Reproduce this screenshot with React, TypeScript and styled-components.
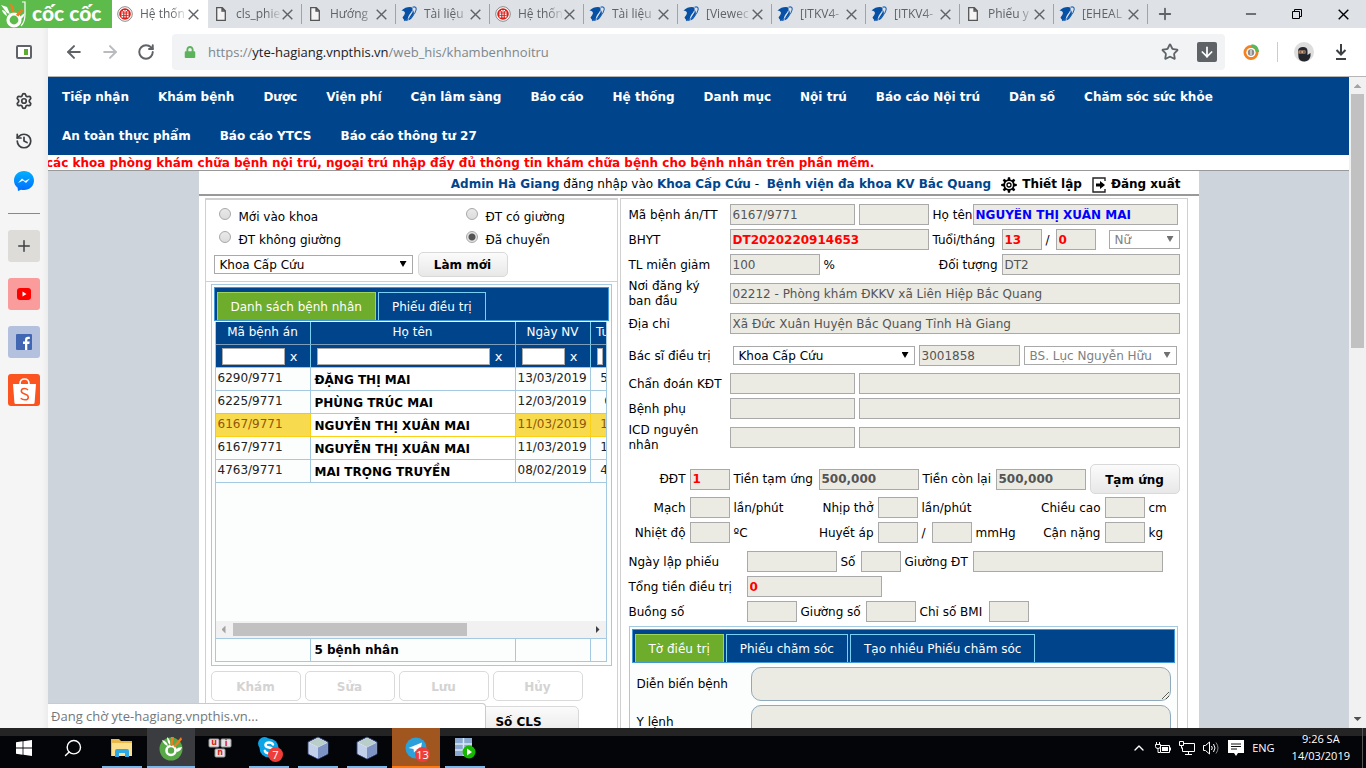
import React from "react";
import styled, { createGlobalStyle, css } from "styled-components";
import { History, Settings, ArrowLeft, ArrowRight, RotateCw, Star, Plus, Minus, Search, ChevronUp, ArrowDown } from "lucide-react";
import { FaLock } from "react-icons/fa";

const pageFont = `"DejaVu Sans", sans-serif`;
const uiFont = `"Open Sans", "Noto Sans", sans-serif`;
const navy = "#00458c";

const GlobalStyle = createGlobalStyle`
  *, *::before, *::after { box-sizing: border-box; }
  body { margin: 0; background: #fff; }
  button, input, select, textarea { font: inherit; margin: 0; }
  a { color: inherit; text-decoration: none; }
`;

/* ---------- browser shell ---------- */

const Shell = styled.div`
  display: flex;
  flex-direction: column;
  height: 100vh;
  overflow: hidden;
  font: 12px/16px ${uiFont};
  color: #000;
`;

const TabStrip = styled.div`
  display: flex;
  align-items: stretch;
  flex: 0 0 28px;
  background: #dee1e6;
  color: #5f6368;
`;

const Brand = styled.div`
  display: flex;
  align-items: center;
  width: 112px;
  background: #5dbb4c;
`;

const BrowserTab = styled.div<{ $active?: boolean }>`
  display: flex;
  align-items: center;
  width: ${(p) => (p.$active ? 96 : 94)}px;
  padding: 0 9px 0 5px;
  background: ${(p) => (p.$active ? "#fff" : "linear-gradient(#a0a4a9, #a0a4a9) right center / 1px 20px no-repeat")};
  svg { flex: none; }
`;

const TabTitle = styled.span`
  flex: 1;
  min-width: 0;
  margin: 0 0 0 7px;
  overflow: hidden;
  white-space: nowrap;
  mask-image: linear-gradient(to right, #000 65%, transparent);
`;

const IconButton = styled.button`
  display: inline-flex;
  align-items: center;
  justify-content: center;
  padding: 0;
  border: 0;
  background: none;
  color: inherit;
`;

const NewTab = styled(IconButton)`
  width: 34px;
`;

const WindowButtons = styled.div`
  display: flex;
  margin-left: auto;
  color: #000;
  button { width: 46px; }
`;

const Middle = styled.div`
  display: flex;
  flex: 1;
  min-height: 0;
`;

const Sidebar = styled.aside`
  display: flex;
  flex-direction: column;
  align-items: center;
  flex: 0 0 48px;
  padding-top: 12px;
  background: linear-gradient(to right, #f5f5f5 42px, #ececec);
  color: #3c4043;
`;

const SideTool = styled(IconButton)`
  width: 32px;
  height: 40px;
`;

const SidePanelTool = styled(IconButton)`
  width: 32px;
  height: 24px;
  margin-bottom: 17px;
`;

const SideRule = styled.hr`
  width: 32px;
  margin: 12px 0 16px;
  border: 0;
  border-top: 1px solid #888;
`;

const SideApp = styled(IconButton)<{ $bg: string }>`
  width: 32px;
  height: 32px;
  margin-bottom: 16px;
  border-radius: 3px;
  background: ${(p) => p.$bg};
`;

const Content = styled.div`
  position: relative;
  display: flex;
  flex: 1;
  flex-direction: column;
  min-width: 0;
`;

const Toolbar = styled.div`
  display: flex;
  align-items: center;
  flex: 0 0 49px;
  padding: 0 19px 0 16px;
  border-bottom: 1px solid #b6b6b6;
  background: #fff;
  color: #5f6368;
`;

const NavTool = styled(IconButton)<{ $dim?: boolean }>`
  width: 20px;
  margin-right: 16px;
  color: ${(p) => (p.$dim ? "#b9bbbe" : "#5f6368")};
`;

const Address = styled.div`
  display: flex;
  align-items: center;
  flex: 1;
  height: 36px;
  padding: 0 8px 0 12px;
  border-radius: 4px;
  background: #f1f3f4;
`;

const Url = styled.a`
  flex: 1;
  margin-left: 12px;
  font-size: 13px;
  line-height: 20px;
  color: #80868b;
  b { font-weight: 400; color: #202124; }
`;

const SaveBadge = styled(IconButton)`
  width: 20px;
  height: 20px;
  margin-left: 18px;
  border-radius: 2px;
  background: #5f6368;
  color: #fff;
`;

const Extensions = styled.div`
  display: flex;
  align-items: center;
  margin-left: 18px;
  button { margin-left: 21px; }
`;

const Divider = styled.span`
  width: 1px;
  height: 20px;
  margin: 0 16px 0 18px;
  background: #ccc;
`;

const Viewport = styled.div`
  display: flex;
  flex: 1;
  min-height: 0;
`;

const ScrollBar = styled.div`
  display: flex;
  flex-direction: column;
  align-items: center;
  flex: 0 0 17px;
  background: #f1f1f1;
`;

const ScrollArrow = styled.span<{ $down?: boolean }>`
  width: 8px;
  height: 4px;
  margin: ${(p) => (p.$down ? "auto 0 7px" : "7px 0 6px")};
  background: ${(p) => (p.$down ? "#505050" : "#a3a3a3")};
  clip-path: ${(p) => (p.$down ? "polygon(0 0, 100% 0, 50% 100%)" : "polygon(50% 0, 100% 100%, 0 100%)")};
`;

const ScrollThumb = styled.span`
  width: 13px;
  height: 39%;
  background: #c1c1c1;
`;

const StatusBubble = styled.div`
  position: absolute;
  left: 0;
  bottom: 0;
  width: 438px;
  height: 25px;
  padding: 4px 3px;
  border: 1px solid #c8ccd0;
  border-width: 1px 1px 0 0;
  border-radius: 0 4px 0 0;
  background: #fff;
  color: #73777b;
  font-size: 13px;
`;

/* ---------- hospital page ---------- */

const Page = styled.div`
  flex: 1;
  min-width: 0;
  overflow: hidden;
  background: #cdd4dc;
  font: 12px/15px ${pageFont};
`;

const Menu = styled.nav`
  display: flex;
  flex-wrap: wrap;
  column-gap: 29px;
  padding: 0 14px;
  background: ${navy};
  color: #fff;
  font-weight: 700;
  line-height: 37px;
  a { padding-top: 2px; }
`;

const Notice = styled.div`
  display: flex;
  height: 16px;
  overflow: hidden;
  border-bottom: 1px solid #999;
  background: #fff;
  color: #f00;
  font-weight: 700;
  line-height: 17px;
  white-space: nowrap;
  span { margin-left: -2px; }
`;

const Sheet = styled.main`
  max-width: 1000px;
  margin: 0 auto;
  background: #fff;
`;

const UserBar = styled.div`
  display: flex;
  align-items: center;
  justify-content: flex-end;
  gap: 5px;
  height: 25px;
  padding: 4px 18px 0 0;
  border-bottom: 2px solid #999;
  white-space: nowrap;
  b { color: ${navy}; }
  svg { margin-left: 5px; }
  a { font-weight: 700; }
`;

const Panels = styled.div`
  display: grid;
  grid-template-columns: 413fr 568fr;
  gap: 2px;
  padding: 2px 11px 0 6px;
`;

const Panel = styled.section`
  min-width: 0;
  border: 1px solid #d0d0d0;
  border-bottom: 0;
`;

const Filters = styled.div`
  height: 83px;
  padding: 5px 8px 0;
  border-top: 1px solid #d0d0d0;
  border-bottom: 1px solid #d0d0d0;
`;

const RadioGrid = styled.div`
  display: grid;
  grid-template-columns: 247px 1fr;
  padding-left: 5px;
  grid-auto-rows: 23px;
`;

const RadioLabel = styled.label`
  display: flex;
  align-items: center;
  gap: 8px;
  padding-top: 1px;
`;

const Radio = styled.input`
  appearance: none;
  width: 12px;
  height: 12px;
  margin-bottom: 6px;
  border: 1px solid #a8a8a8;
  border-radius: 50%;
  background: linear-gradient(#e9e9e9, #dcdcdc);
  &:checked { background: radial-gradient(circle, #555 0 3px, #e4e4e4 4px); }
`;

const FilterRow = styled.div`
  display: flex;
  align-items: center;
  gap: 5px;
  margin-top: 1px;
`;

const PushButton = styled.button`
  width: 90px;
  height: 30px;
  padding: 2px 0 0;
  border: 1px solid #d9d9d9;
  border-radius: 5px;
  background: linear-gradient(#fbfbfb, #e8e8e8);
  color: #000;
  font-weight: 700;
  &:disabled { border-color: #dadada; background: #fff; color: #d3d3d3; }
`;

const ReloadButton = styled(PushButton)`
  height: 25px;
`;

const SelectBox = styled.span<{ $w: number; $dim?: boolean }>`
  position: relative;
  display: inline-block;
  width: ${(p) => p.$w}px;
  height: 19px;
  select {
    appearance: none;
    display: block;
    width: 100%;
    height: 100%;
    padding: 1px 5px 0;
    border: 1px solid #a9a9a9;
    border-radius: 0;
    background: #fff;
    color: ${(p) => (p.$dim ? "#808080" : "#000")};
    opacity: 1;
  }
  &::after {
    content: "";
    position: absolute;
    right: 6px;
    top: 6px;
    width: 7px;
    height: 6px;
    background: ${(p) => (p.$dim ? "#707070" : "#000")};
    clip-path: polygon(0 0, 100% 0, 50% 100%);
  }
`;

const TabBox = styled.div<{ $m: string }>`
  margin: ${(p) => p.$m};
  padding: 2px;
  border: 1px solid #a6c9e2;
  background: #fcfdfd;
`;

const TabHeader = styled.div`
  display: flex;
  gap: 2px;
  height: 34px;
  padding: 4px 2px 0;
  border: 1px solid #4297d7;
  background: ${navy};
`;

const Tab = styled.button<{ $on?: boolean }>`
  padding: 2px 13px 0;
  border: 1px solid #79d0f2;
  border-bottom: 0;
  background: ${navy};
  color: #fff;
  white-space: nowrap;
  ${(p) => p.$on && css`
    border-color: #9fd45a;
    background: #6eac2c;
  `}
`;

const Grid = styled.div`
  margin: 1px 2px 1px 1px;
  border: 1px solid #a6c9e2;
  border-top: 0;
  overflow: hidden;
`;

const GridBody = styled.div`
  height: 299px;
  overflow: hidden;
`;

const GridTable = styled.table`
  width: 411px;
  table-layout: fixed;
  border-collapse: separate;
  border-spacing: 0;
  th, td { padding: 0; overflow: hidden; white-space: nowrap; }
  th {
    height: 23px;
    padding-bottom: 1px;
    border-right: 1px solid #79d0f2;
    border-bottom: 1px solid #7f9cb8;
    background: ${navy};
    color: #fff;
    font-weight: 400;
  }
  th.search { padding-bottom: 0; border-bottom-color: #79d0f2; }
`;

const Cell = styled.td<{ $hl?: boolean; $name?: boolean; $center?: boolean }>`
  height: 23px;
  border-right: 1px solid #a6c9e2;
  border-bottom: 1px solid #a6c9e2;
  color: #222;
  && { padding: ${(p) => (p.$name ? "2px 4px 0" : p.$center ? "0 0 1px" : "0 2px 1px")}; }
  text-align: ${(p) => (p.$center ? "center" : "left")};
  ${(p) => p.$name && css`
    background: #fff;
    color: #000;
    font-weight: 700;
  `}
  ${(p) => p.$hl && css`
    border-color: #fcd113;
    ${!p.$name && css`
      background: #f8da4e;
      color: #915608;
    `}
  `}
`;

const SearchCell = styled.div`
  display: flex;
  align-items: center;
  gap: 5px;
  padding: 0 12px 0 6px;
  input {
    flex: 1;
    min-width: 0;
    height: 17px;
    border: 1px solid #a9a9a9;
    background: #fff;
  }
  button { flex: 0 0 8px; padding: 0; border: 0; background: none; color: #fff; font-size: 13px; }
`;

const HScroll = styled.div`
  display: flex;
  align-items: center;
  height: 17px;
  padding: 0 6px;
  background: #f1f1f1;
`;

const HArrow = styled.span<{ $right?: boolean }>`
  width: 4px;
  height: 8px;
  margin-left: ${(p) => (p.$right ? "auto" : "0")};
  background: ${(p) => (p.$right ? "#404040" : "#a3a3a3")};
  clip-path: ${(p) => (p.$right ? "polygon(0 0, 100% 50%, 0 100%)" : "polygon(100% 0, 100% 100%, 0 50%)")};
`;

const HThumb = styled.span`
  width: 62%;
  height: 13px;
  margin-left: 7px;
  background: #c1c1c1;
`;

const GridFooter = styled.div`
  display: grid;
  grid-template-columns: 95px 205px 75px 1fr;
  height: 23px;
  border-top: 1px solid #a6c9e2;
  line-height: 23px;
  font-weight: 700;
  span { padding-left: 4px; border-right: 1px solid #a6c9e2; }
  span:last-child { border-right: 0; }
`;

const Actions = styled.div`
  display: flex;
  gap: 4px;
  padding: 5px 5px 0;
`;

const MoreActions = styled(Actions)`
  justify-content: flex-end;
  padding-right: 38px;
  button { width: 120px; }
`;

const Form = styled.form`
  padding: 3px 6px 0 8px;
`;

const Row = styled.div<{ $h?: number; $mt?: number }>`
  display: flex;
  align-items: center;
  gap: 4px;
  height: ${(p) => p.$h ?? 25}px;
  margin-top: ${(p) => p.$mt ?? 0}px;
  padding-right: 1px;
`;

const Label = styled.label<{ $w?: number; $right?: boolean; $wrap?: boolean }>`
  flex: 0 0 auto;
  width: ${(p) => (p.$w ? `${p.$w}px` : "auto")};
  padding-top: 1px;
  padding-right: ${(p) => (p.$wrap ? 12 : 0)}px;
  white-space: ${(p) => (p.$wrap ? "normal" : "nowrap")};
  ${(p) => p.$right && css`
    display: flex;
    justify-content: flex-end;
  `}
`;

const RowEnd = styled.div`
  display: flex;
  align-items: center;
  gap: 4px;
  margin-left: auto;
`;

const Box = styled.input<{ $w?: number; $color?: string }>`
  flex: ${(p) => (p.$w ? "0 0 auto" : "1 1 0")};
  width: ${(p) => (p.$w ? `${p.$w}px` : "auto")};
  min-width: 0;
  height: 21px;
  padding: 0 2px;
  border: 1px solid #a9a9a9;
  background: #ebebe4;
  color: ${(p) => p.$color ?? "#545454"};
  font-weight: ${(p) => (p.$color ? 700 : 400)};
  line-height: 19px;
`;

const Note = styled.div`
  display: flex;
  align-items: center;
  gap: 4px;
  margin-top: 4px;
  padding: 0 4px 0 5px;
  textarea {
    flex: 1;
    height: 34px;
    border: 1px solid #8fa9bd;
    border-radius: 10px;
    background: #ebebe4;
    resize: vertical;
  }
`;

/* ---------- task bar ---------- */

const TaskBar = styled.footer`
  display: flex;
  flex: 0 0 40px;
  gap: 1px;
  background: linear-gradient(#242424 8px, #030509 8px);
  color: #fff;
`;

const TaskButton = styled(IconButton)<{ $bg?: string; $line?: string; $full?: boolean }>`
  position: relative;
  width: 48px;
  height: 40px;
  background: ${(p) => p.$bg ?? "none"};
  &::after {
    content: "";
    position: absolute;
    bottom: 0;
    left: ${(p) => (p.$full ? 0 : 4)}px;
    right: ${(p) => (p.$full ? 0 : 4)}px;
    height: 2px;
    background: ${(p) => p.$line ?? "transparent"};
  }
`;

const Count = styled.span`
  position: absolute;
  right: 10px;
  bottom: 6px;
  min-width: 15px;
  height: 15px;
  border-radius: 8px;
  background: #ef3e3a;
  font-size: 11px;
  line-height: 15px;
`;

const Tray = styled.div`
  display: flex;
  align-items: center;
  gap: 8px;
  margin-left: auto;
  margin-right: 3px;
  padding-right: 12px;
  border-right: 1px solid #555;
  font-size: 11px;
`;

const Clock = styled.div`
  margin-left: 9px;
  padding-bottom: 3px;
  line-height: 17px;
  text-align: center;
`;

/* ---------- drawings ---------- */

const CloseIcon = () => (
  <svg width="11" height="11" viewBox="0 0 11 11" fill="none" stroke="currentColor" strokeWidth="1.400">
    <path d="M.7.7l9.600 9.600M10.300.7L.7 10.300" />
  </svg>
);

const CocLogo = () => (
  <svg width="112" height="28" viewBox="0 0 112 28">
    <circle cx="14" cy="20" r="6" fill="none" stroke="#fff" strokeWidth="3.200" />
    <path d="M2 10q1 4 5 6-1-6-5-6zM1 5l6 8 3 1-3-7z" fill="#fff" />
    <path d="M10 3l1.500 9 3 .5Q14 5 10 3zM23.500 9.500Q18 10 16 15l2.500 1.500z" fill="#f47b20" />
    <path d="M25 13q-3 1.500-5 4l1 2q3-2 4-6z" fill="#fff" />
    <path d="M22 2h3v12q0 8-4 12" stroke="#fff" strokeWidth="1.200" fill="none" />
    <text x="32" y="21" fill="#fff" fontFamily="Lato, sans-serif" fontWeight="900" fontSize="21">cốc cốc</text>
  </svg>
);

const SealIcon = () => (
  <svg width="16" height="16" viewBox="0 0 16 16">
    <circle cx="8" cy="8" r="7.300" fill="#fff" stroke="#888" />
    <circle cx="8" cy="8" r="5.800" fill="#d9201a" />
    <path d="M4.500 5.500h1.500V4h4v1.500h1.500v6h-7z" fill="#fff" />
    <path d="M6.500 5v7M9.500 5v7M8 4v8M4.500 7h7M4.500 9.500h7" stroke="#d9201a" strokeWidth=".8" fill="none" />
  </svg>
);

const PageIcon = () => (
  <svg width="16" height="16" viewBox="0 0 16 16">
    <path d="M3.700 1.700h5.600l3 3v9.600H3.700z M9 1.700v3.300h3.300" fill="#f4f4f4" stroke="#555" strokeWidth="1.300" />
  </svg>
);

const VnptIcon = () => (
  <svg width="16" height="16" viewBox="0 0 16 16">
    <path d="M.5 4.500Q5 .5 10.500 1.200Q13 2.200 10 6.500Q6.500 10.500 6.500 15Q2.500 14.500 1.500 11.500Q3.500 9.500 4 7Q3.500 4.500 .5 4.500Z" fill="#0650a5" />
    <path d="M11.500 3.500Q14 6.500 12 10.500Q10 14 7.500 14.500Q8 11 10.500 8Q12.300 5.500 11.500 3.500Z" fill="#0650a5" />
    <path d="M11.500 1.200Q15.500 0 15.200 3.500Q13.500 11.500 3 14.800" fill="none" stroke="#2467b5" strokeWidth="1.100" />
  </svg>
);

const PanelIcon = () => (
  <svg width="16" height="14" viewBox="0 0 16 14">
    <rect x="1" y="1" width="14" height="12" rx="1" fill="#fff" stroke="#5f6368" strokeWidth="2" />
    <rect x="8" y="4" width="4" height="6" fill="#5dab2f" />
  </svg>
);

const MessengerIcon = () => (
  <svg width="20" height="20" viewBox="0 0 20 20">
    <defs>
      <linearGradient id="msg" x1="0" y1="0" x2="0" y2="1">
        <stop offset="0" stopColor="#00b2ff" />
        <stop offset="1" stopColor="#006aff" />
      </linearGradient>
    </defs>
    <path d="M10 0C4.400 0 0 4.100 0 9.500c0 3 1.400 5.600 3.600 7.300L4 20l3-1.300c1 .2 2 .3 3 .3 5.600 0 10-4 10-9.500S15.600 0 10 0z" fill="url(#msg)" />
    <path d="M4 12l4-4.500 3 2.500 5-2.500-4 4.500-3-2.500z" fill="#fff" />
  </svg>
);

const YoutubeIcon = () => (
  <svg width="16" height="12" viewBox="0 0 16 12">
    <rect x="1" width="14" height="12" rx="3" fill="#f00" />
    <path d="M6.500 3.500v5L10.500 6z" fill="#fff" />
  </svg>
);

const FacebookIcon = () => (
  <svg width="16" height="16" viewBox="0 0 16 16">
    <rect width="16" height="16" rx="1" fill="#4267b2" />
    <path d="M9 16V10H7V7.600h2V6q0-3.200 3-3.200h1.800V5h-1.300q-1.200 0-1.200 1.200v1.400h2.400L13.300 10h-2v6z" fill="#fff" />
  </svg>
);

const ShopeeIcon = () => (
  <svg width="32" height="32" viewBox="0 0 32 32">
    <path d="M5 10h23l-1.400 18.500q-.1 1.500-1.600 1.500H8q-1.500 0-1.600-1.500z" fill="#fff" />
    <path d="M12 10q0-5 4.500-5t4.500 5" fill="none" stroke="#fff" strokeWidth="1.600" />
    <path d="M20 16q-1.500-1.500-3.500-1.500-3.200 0-3.200 2.600 0 1.900 3.400 2.900 3.600 1 3.600 3.200 0 2.600-3.500 2.600-2.300 0-4.100-1.600" fill="none" stroke="#fb5421" strokeWidth="1.500" />
  </svg>
);

const CocRing = () => (
  <svg width="16" height="16" viewBox="0 0 16 16">
    <circle cx="8" cy="8.500" r="6" fill="none" stroke="#f58220" strokeWidth="3" />
    <path d="M8.500 1.800Q14 2 14.500 8" fill="none" stroke="#57b75a" strokeWidth="3.200" />
    <circle cx="8" cy="8.500" r="4.500" fill="#fff" />
    <circle cx="8" cy="8.500" r="3.200" fill="#8b8b8b" />
    <path d="M8 6v5" stroke="#fff" />
  </svg>
);

const NinjaIcon = () => (
  <svg width="20" height="20" viewBox="0 0 20 20">
    <circle cx="10" cy="10" r="10" fill="#ddd" />
    <path d="M4 8.500Q4.500 5 9 5q4.500 0 4.500 4v4l3-2v3q-1 5-6 5.500-5 0-6-4z" fill="#23262d" />
    <path d="M4.500 8.500h7v3h-7z" fill="#e0a986" />
    <path d="M5.500 10h2m1.500 0h2" stroke="#222" />
  </svg>
);

const DownloadIcon = () => (
  <svg width="12" height="16" viewBox="0 0 12 16">
    <path d="M6 0v10M1.500 6L6 10.500 10.500 6M1 15h10" fill="none" stroke="#3c4043" strokeWidth="2" />
  </svg>
);

const gearSpokes = [0, 45, 90, 135, 180, 225, 270, 315];
const CogIcon = () => (
  <svg width="16" height="16" viewBox="0 0 16 16">
    <circle cx="8" cy="8" r="4.800" fill="none" stroke="#000" strokeWidth="1.800" />
    <circle cx="8" cy="8" r="2" fill="none" stroke="#000" strokeWidth="1.300" />
    {gearSpokes.map((a) => (
      <path key={a} d="M6.900 .2h2.200l.4 3H6.500z" transform={`rotate(${a} 8 8)`} />
    ))}
  </svg>
);

const LogoutIcon = () => (
  <svg width="14" height="16" viewBox="0 0 14 16">
    <path d="M13 4V1H1v14h12v-3" fill="none" stroke="#222" strokeWidth="1.400" />
    <path d="M4 6.500h4V4l5 4-5 4V9.500H4z" />
  </svg>
);

const WindowsIcon = () => (
  <svg width="16" height="16" viewBox="0 0 16 16" fill="#fff">
    <path d="M0 2.300L6.600 1.300V7.600H0zM7.400 1.200L16 0v7.600H7.400zM0 8.400h6.600v6.300L0 13.700zM7.400 8.400H16V16l-8.600-1.200z" />
  </svg>
);

const FolderIcon = () => (
  <svg width="22" height="20" viewBox="0 0 22 20">
    <path d="M0 1h8l2 2h11v15H0z" fill="#e9b949" />
    <path d="M1 5h20v13H1z" fill="#fde08c" />
    <path d="M4 19v-6q0-2 2-2h10q2 0 2 2v6h-4v-4H8v4z" fill="#2fa9e6" />
  </svg>
);

const CocTask = () => (
  <svg width="26" height="26" viewBox="0 0 26 26">
    <circle cx="13" cy="14" r="11.500" fill="#57a846" />
    <circle cx="13" cy="15.500" r="4.500" fill="none" stroke="#fff" strokeWidth="2.600" />
    <path d="M4 5q2 5 6 6Q9 6 4 5zM9 2q0 5 3 8 1-5-3-8zM24 12q-4 0-7 3l2 2q4-1 5-5z" fill="#fff" />
    <path d="M13 2h3l-1.500 9h-2zM23 2l1 2.500-7 8-1.500-1.500z" fill="#f47b20" />
  </svg>
);

const KeysIcon = () => (
  <svg width="24" height="20" viewBox="0 0 24 20" fontFamily="DejaVu Sans, sans-serif" fontWeight="700" fontSize="8" fill="#d22" textAnchor="middle">
    <rect x="1" y="1" width="10" height="8" rx="1" fill="#e4e4e4" stroke="#999" />
    <rect x="13" y="1" width="10" height="8" rx="1" fill="#e4e4e4" stroke="#999" />
    <rect x="7" y="11" width="10" height="8" rx="1" fill="#e4e4e4" stroke="#999" />
    <text x="6" y="7">u</text>
    <text x="18" y="8">i</text>
    <text x="12" y="17">n</text>
  </svg>
);

const SkypeIcon = () => (
  <svg width="24" height="24" viewBox="0 0 24 24">
    <circle cx="7.500" cy="7.500" r="6.500" fill="#0aa5e8" />
    <circle cx="16.500" cy="16.500" r="6.500" fill="#0aa5e8" />
    <circle cx="12" cy="12" r="9.500" fill="#0aa5e8" />
    <path d="M16 8.500q-1-2-4-2t-3.600 2.400q0 2 3.600 2.600 4 .7 4 3 0 2.700-4 2.700-3.300 0-4.200-2.400" fill="none" stroke="#fff" strokeWidth="2.400" strokeLinecap="round" />
  </svg>
);

const CubeIcon = () => (
  <svg width="22" height="24" viewBox="0 0 22 24">
    <path d="M11 1l10 5v12l-10 5L1 18V6z" fill="#e5ebf5" stroke="#2b3f77" />
    <path d="M11 2l9 4.500-9 4.500-9-4.500z" fill="#b9cdc9" />
    <path d="M2 7l9 4.500v11L2 18z" fill="#c3d0ea" />
    <path d="M20 7l-9 4.500v11l9-4.500z" fill="#7d93c4" />
  </svg>
);

const TelegramIcon = () => (
  <svg width="22" height="22" viewBox="0 0 22 22">
    <circle cx="11" cy="11" r="10.500" fill="#2ba0da" />
    <path d="M3.500 11L17 5.500 15 16.500l-4-3-2 2-.5-3.500z" fill="#fff" />
  </svg>
);

const ServerIcon = () => (
  <svg width="22" height="22" viewBox="0 0 22 22">
    <path d="M1 1h17v18H1z" fill="#8aa9d0" />
    <path d="M1 7h17M1 13h17M9.500 1v18" stroke="#dce8f5" strokeWidth="1.500" />
    <circle cx="15" cy="15" r="6.500" fill="#16b800" />
    <path d="M13 11.500v7l5-3.500z" fill="#fff" />
  </svg>
);

const BatteryIcon = () => (
  <svg width="16" height="14" viewBox="0 0 16 14" fill="none" stroke="#fff">
    <path d="M5.500 4.500h9v7h-9zM15.500 6.500v3M1.500 1v2M4.500 1v2M.5 3.500h5v2q0 2-2.500 2t-2.500-2zM3 7.500v4h2" />
    <path d="M7 6h6v4H7z" fill="#fff" stroke="none" />
  </svg>
);

const MonitorIcon = () => (
  <svg width="16" height="14" viewBox="0 0 16 14" fill="none" stroke="#fff">
    <path d="M5 2.500h10.500v8H3.500v-4M9.500 10.500v3M6 13.500h7M.5.500h4v4h-4zM2.500 4.500v3" />
  </svg>
);

const SoundIcon = () => (
  <svg width="17" height="14" viewBox="0 0 17 14" fill="none" stroke="#fff">
    <path d="M.5 4.500h2l4-3.500v12l-4-3.500h-2zM8.500 5q1.500 2 0 4M10.500 3q3 4 0 8" />
    <path d="M13 1.500q4 5.500 0 11" stroke="#888" />
  </svg>
);

const NoteIcon = () => (
  <svg width="16" height="16" viewBox="0 0 16 16">
    <path d="M0 0h16v13h-6l-2 3-2-3H0z" fill="#fff" />
    <path d="M3 4h10M3 6.500h10M3 9h6" stroke="#111" />
  </svg>
);

/* ---------- data ---------- */

const tabs = [
  { icon: <SealIcon />, title: "Hệ thốn", active: true },
  { icon: <PageIcon />, title: "cls_phie" },
  { icon: <PageIcon />, title: "Hướng" },
  { icon: <VnptIcon />, title: "Tài liệu" },
  { icon: <SealIcon />, title: "Hệ thốn" },
  { icon: <VnptIcon />, title: "Tài liệu" },
  { icon: <VnptIcon />, title: "[Viewec" },
  { icon: <VnptIcon />, title: "[ITKV4-" },
  { icon: <VnptIcon />, title: "[ITKV4-" },
  { icon: <PageIcon />, title: "Phiếu y" },
  { icon: <VnptIcon />, title: "[EHEAL" },
];

const menu = [
  "Tiếp nhận", "Khám bệnh", "Dược", "Viện phí", "Cận lâm sàng", "Báo cáo", "Hệ thống", "Danh mục",
  "Nội trú", "Báo cáo Nội trú", "Dân số", "Chăm sóc sức khỏe", "An toàn thực phẩm", "Báo cáo YTCS",
  "Báo cáo thông tư 27",
];

const columns = ["Mã bệnh án", "Họ tên", "Ngày NV", "Tuổi"];

const patients = [
  { code: "6290/9771", name: "ĐẶNG THỊ MAI", date: "13/03/2019", age: "53" },
  { code: "6225/9771", name: "PHÙNG TRÚC MAI", date: "12/03/2019", age: "6" },
  { code: "6167/9771", name: "NGUYỄN THỊ XUÂN MAI", date: "11/03/2019", age: "13", selected: true },
  { code: "6167/9771", name: "NGUYỄN THỊ XUÂN MAI", date: "11/03/2019", age: "13" },
  { code: "4763/9771", name: "MAI TRỌNG TRUYỀN", date: "08/02/2019", age: "47" },
];

const states = ["Mới vào khoa", "ĐT có giường", "ĐT không giường", "Đã chuyển"];

function Dropdown({ id, w, dim, text, label }: { id: string; w: number; dim?: boolean; text: string; label?: string }) {
  return (
    <SelectBox $w={w} $dim={dim}>
      <select id={id} disabled={dim} aria-label={label}>
        <option>{text}</option>
      </select>
    </SelectBox>
  );
}

function PatientList() {
  return (
    <Panel>
      <Filters>
        <RadioGrid>
          {states.map((s) => (
            <RadioLabel key={s}>
              <Radio type="radio" name="state" defaultChecked={s === "Đã chuyển"} />
              {s}
            </RadioLabel>
          ))}
        </RadioGrid>
        <FilterRow>
          <Dropdown id="dept" w={199} text="Khoa Cấp Cứu" label="Khoa" />
          <ReloadButton type="button">Làm mới</ReloadButton>
        </FilterRow>
      </Filters>
      <TabBox $m="2px 5px 0">
        <TabHeader>
          <Tab $on>Danh sách bệnh nhân</Tab>
          <Tab>Phiếu điều trị</Tab>
        </TabHeader>
        <Grid>
          <GridBody>
            <GridTable>
              <colgroup>
                <col width={95} />
                <col width={205} />
                <col width={75} />
                <col width={36} />
              </colgroup>
              <thead>
                <tr>{columns.map((h) => <th key={h}>{h}</th>)}</tr>
                <tr>
                  {columns.map((h) => (
                    <th key={h} className="search">
                      <SearchCell>
                        <input aria-label={h} />
                        <button type="button">x</button>
                      </SearchCell>
                    </th>
                  ))}
                </tr>
              </thead>
              <tbody>
                {patients.map((p, i) => (
                  <tr key={i}>
                    <Cell $hl={p.selected}>{p.code}</Cell>
                    <Cell $hl={p.selected} $name>{p.name}</Cell>
                    <Cell $hl={p.selected}>{p.date}</Cell>
                    <Cell $hl={p.selected} $center>{p.age}</Cell>
                  </tr>
                ))}
              </tbody>
            </GridTable>
          </GridBody>
          <HScroll>
            <HArrow />
            <HThumb />
            <HArrow $right />
          </HScroll>
          <GridFooter>
            <span />
            <span>5 bệnh nhân</span>
            <span />
            <span />
          </GridFooter>
        </Grid>
      </TabBox>
      <Actions>
        {["Khám", "Sửa", "Lưu", "Hủy"].map((t) => <PushButton key={t} disabled>{t}</PushButton>)}
      </Actions>
      <MoreActions>
        <PushButton>Số CLS</PushButton>
      </MoreActions>
    </Panel>
  );
}

function TreatmentForm() {
  return (
    <Panel>
      <Form>
        <Row>
          <Label $w={97} htmlFor="code">Mã bệnh án/TT</Label>
          <Box $w={125} id="code" readOnly value="6167/9771" />
          <Box $w={70} aria-label="TT" readOnly />
          <Label $w={36} htmlFor="name">Họ tên</Label>
          <Box $w={205} $color="#0000ff" id="name" readOnly value="NGUYỄN THỊ XUÂN MAI" />
        </Row>
        <Row>
          <Label $w={97} htmlFor="bhyt">BHYT</Label>
          <Box $w={199} $color="#ff0000" id="bhyt" readOnly value="DT2020220914653" />
          <Label $w={65} htmlFor="age">Tuổi/tháng</Label>
          <Box $w={40} $color="#ff0000" id="age" readOnly value="13" />
          <Label $w={6} htmlFor="month">/</Label>
          <Box $w={40} $color="#ff0000" id="month" readOnly value="0" />
          <RowEnd>
            <Dropdown id="sex" w={71} dim text="Nữ" label="Giới tính" />
          </RowEnd>
        </Row>
        <Row>
          <Label $w={97} htmlFor="free">TL miễn giảm</Label>
          <Box $w={90} id="free" readOnly value="100" />
          <Label htmlFor="free">%</Label>
          <RowEnd>
            <Label htmlFor="kind">Đối tượng</Label>
            <Box $w={178} id="kind" readOnly value="DT2" />
          </RowEnd>
        </Row>
        <Row $h={33}>
          <Label $w={97} $wrap htmlFor="place">Nơi đăng ký ban đầu</Label>
          <Box id="place" readOnly value="02212 - Phòng khám ĐKKV xã Liên Hiệp Bắc Quang" />
        </Row>
        <Row $mt={1}>
          <Label $w={97} htmlFor="addr">Địa chỉ</Label>
          <Box id="addr" readOnly value="Xã Đức Xuân Huyện Bắc Quang Tỉnh Hà Giang" />
        </Row>
        <Row $mt={7}>
          <Label $w={100} htmlFor="doc">Bác sĩ điều trị</Label>
          <Dropdown id="doc" w={182} text="Khoa Cấp Cứu" />
          <Box $w={101} aria-label="Mã bác sĩ" readOnly value="3001858" />
          <Dropdown id="docname" w={153} dim text="BS. Lục Nguyễn Hữu" label="Bác sĩ" />
        </Row>
        <Row $mt={3}>
          <Label $w={97} htmlFor="diag">Chẩn đoán KĐT</Label>
          <Box $w={125} id="diag" readOnly />
          <Box aria-label="Tên chẩn đoán" readOnly />
        </Row>
        <Row>
          <Label $w={97} htmlFor="sub">Bệnh phụ</Label>
          <Box $w={125} id="sub" readOnly />
          <Box aria-label="Tên bệnh phụ" readOnly />
        </Row>
        <Row $h={33}>
          <Label $w={97} $wrap htmlFor="icd">ICD nguyên nhân</Label>
          <Box $w={125} id="icd" readOnly />
          <Box aria-label="Tên ICD" readOnly />
        </Row>
        <Row $mt={9} $h={32}>
          <Label $w={57} $right htmlFor="ddt">ĐĐT</Label>
          <Box $w={40} $color="#ff0000" id="ddt" readOnly value="1" />
          <Label $w={81} htmlFor="adv">Tiền tạm ứng</Label>
          <Box $w={100} $color="#545454" id="adv" readOnly value="500,000" />
          <Label $w={69} htmlFor="left">Tiền còn lại</Label>
          <Box $w={90} $color="#545454" id="left" readOnly value="500,000" />
          <PushButton type="button">Tạm ứng</PushButton>
        </Row>
        <Row>
          <Label $w={57} $right htmlFor="pulse">Mạch</Label>
          <Box $w={40} id="pulse" readOnly />
          <Label $w={60} htmlFor="pulse">lần/phút</Label>
          <Label $w={76} $right htmlFor="breath">Nhịp thở</Label>
          <Box $w={40} id="breath" readOnly />
          <Label $w={60} htmlFor="breath">lần/phút</Label>
          <Label $w={115} $right htmlFor="height">Chiều cao</Label>
          <Box $w={40} id="height" readOnly />
          <Label htmlFor="height">cm</Label>
        </Row>
        <Row>
          <Label $w={57} $right htmlFor="temp">Nhiệt độ</Label>
          <Box $w={40} id="temp" readOnly />
          <Label $w={60} htmlFor="temp">ºC</Label>
          <Label $w={76} $right htmlFor="bp">Huyết áp</Label>
          <Box $w={40} id="bp" readOnly />
          <Label $w={6} htmlFor="bp2">/</Label>
          <Box $w={40} id="bp2" readOnly />
          <Label $w={40} htmlFor="bp2">mmHg</Label>
          <Label $w={81} $right htmlFor="weight">Cận nặng</Label>
          <Box $w={40} id="weight" readOnly />
          <Label htmlFor="weight">kg</Label>
        </Row>
        <Row $mt={4}>
          <Label $w={114} htmlFor="date">Ngày lập phiếu</Label>
          <Box $w={90} id="date" readOnly />
          <Label $w={16} htmlFor="no">Số</Label>
          <Box $w={40} id="no" readOnly />
          <Label $w={64} htmlFor="bed">Giường ĐT</Label>
          <Box $w={190} id="bed" readOnly />
        </Row>
        <Row>
          <Label $w={114} htmlFor="total">Tổng tiền điều trị</Label>
          <Box $w={135} $color="#ff0000" id="total" readOnly value="0" />
        </Row>
        <Row>
          <Label $w={114} htmlFor="room">Buồng số</Label>
          <Box $w={50} id="room" readOnly />
          <Label $w={61} htmlFor="bedno">Giường số</Label>
          <Box $w={50} id="bedno" readOnly />
          <Label $w={65} htmlFor="bmi">Chỉ số BMI</Label>
          <Box $w={40} id="bmi" readOnly />
        </Row>
        <TabBox $m="2px 3px 0 0">
          <TabHeader>
            <Tab type="button" $on>Tờ điều trị</Tab>
            <Tab type="button">Phiếu chăm sóc</Tab>
            <Tab type="button">Tạo nhiều Phiếu chăm sóc</Tab>
          </TabHeader>
          <Note>
            <Label $w={110} htmlFor="progress">Diễn biến bệnh</Label>
            <textarea id="progress" readOnly />
          </Note>
          <Note>
            <Label $w={110} htmlFor="order">Y lệnh</Label>
            <textarea id="order" readOnly />
          </Note>
        </TabBox>
      </Form>
    </Panel>
  );
}

export default function App() {
  return (
    <>
      <GlobalStyle />
      <Shell>
        <TabStrip>
          <Brand><CocLogo /></Brand>
          {tabs.map((t, i) => (
            <BrowserTab key={i} $active={t.active}>
              {t.icon}
              <TabTitle>{t.title}</TabTitle>
              <IconButton aria-label="Đóng"><CloseIcon /></IconButton>
            </BrowserTab>
          ))}
          <NewTab aria-label="Thẻ mới"><Plus size={18} strokeWidth={2.400} /></NewTab>
          <WindowButtons>
            <IconButton aria-label="Thu nhỏ"><Minus size={16} strokeWidth={1.500} /></IconButton>
            <IconButton aria-label="Khôi phục">
              <svg width="10" height="10" viewBox="0 0 10 10" fill="none" stroke="#000">
                <path d="M.5 2.500h7v7h-7zM2.500 2.500v-2h7v7h-2" />
              </svg>
            </IconButton>
            <IconButton aria-label="Đóng cửa sổ"><CloseIcon /></IconButton>
          </WindowButtons>
        </TabStrip>
        <Middle>
          <Sidebar>
            <SidePanelTool aria-label="Bảng"><PanelIcon /></SidePanelTool>
            <SideTool aria-label="Cài đặt"><Settings size={18} strokeWidth={2.300} /></SideTool>
            <SideTool aria-label="Lịch sử"><History size={18} strokeWidth={2.300} /></SideTool>
            <SideTool aria-label="Messenger"><MessengerIcon /></SideTool>
            <SideRule />
            <SideApp $bg="#dddcd8" aria-label="Thêm"><Plus size={18} /></SideApp>
            <SideApp $bg="#fa9c9c" aria-label="YouTube"><YoutubeIcon /></SideApp>
            <SideApp $bg="#b3c1de" aria-label="Facebook"><FacebookIcon /></SideApp>
            <SideApp $bg="#fb5421" aria-label="Shopee"><ShopeeIcon /></SideApp>
          </Sidebar>
          <Content>
            <Toolbar>
              <NavTool aria-label="Quay lại"><ArrowLeft size={20} strokeWidth={2.400} /></NavTool>
              <NavTool aria-label="Tiến" $dim><ArrowRight size={20} strokeWidth={2.400} /></NavTool>
              <NavTool aria-label="Tải lại"><RotateCw size={18} strokeWidth={2.600} /></NavTool>
              <Address>
                <FaLock size={12} color="#5db35c" />
                <Url href="#">https://<b>yte-hagiang.vnpthis.vn</b>/web_his/khambenhnoitru</Url>
                <IconButton aria-label="Đánh dấu"><Star size={18} strokeWidth={2.400} /></IconButton>
                <SaveBadge aria-label="Lưu trang"><ArrowDown size={16} strokeWidth={2.600} /></SaveBadge>
              </Address>
              <Extensions>
                <CocRing />
                <Divider />
                <NinjaIcon />
                <IconButton aria-label="Tải xuống"><DownloadIcon /></IconButton>
              </Extensions>
            </Toolbar>
            <Viewport>
              <Page>
                <Menu>{menu.map((m) => <a key={m} href="#">{m}</a>)}</Menu>
                <Notice>
                  <span>các khoa phòng khám chữa bệnh nội trú, ngoại trú nhập đầy đủ thông tin khám chữa bệnh cho bệnh nhân trên phần mềm.</span>
                </Notice>
                <Sheet>
                  <UserBar>
                    <span><b>Admin Hà Giang</b> đăng nhập vào <b>Khoa Cấp Cứu</b> - &nbsp;<b>Bệnh viện đa khoa KV Bắc Quang</b></span>
                    <CogIcon />
                    <a href="#">Thiết lập</a>
                    <LogoutIcon />
                    <a href="#">Đăng xuất</a>
                  </UserBar>
                  <Panels>
                    <PatientList />
                    <TreatmentForm />
                  </Panels>
                </Sheet>
              </Page>
              <ScrollBar>
                <ScrollArrow />
                <ScrollThumb />
                <ScrollArrow $down />
              </ScrollBar>
            </Viewport>
            <StatusBubble>Đang chờ yte-hagiang.vnpthis.vn...</StatusBubble>
          </Content>
        </Middle>
        <TaskBar>
          <TaskButton aria-label="Start"><WindowsIcon /></TaskButton>
          <TaskButton aria-label="Tìm kiếm"><Search size={20} strokeWidth={1.700} transform="scale(-1 1)" /></TaskButton>
          <TaskButton aria-label="Explorer" $line="#76b9ed"><FolderIcon /></TaskButton>
          <TaskButton aria-label="Cốc Cốc" $line="#76b9ed" $bg="#3b3c3f" $full><CocTask /></TaskButton>
          <TaskButton aria-label="Unikey"><KeysIcon /></TaskButton>
          <TaskButton aria-label="Skype" $line="#76b9ed"><SkypeIcon /><Count>7</Count></TaskButton>
          <TaskButton aria-label="NetBeans" $line="#76b9ed"><CubeIcon /></TaskButton>
          <TaskButton aria-label="NetBeans 2" $line="#76b9ed"><CubeIcon /></TaskButton>
          <TaskButton aria-label="Telegram" $line="#ff7a0a" $bg="#a1561f" $full><TelegramIcon /><Count>13</Count></TaskButton>
          <TaskButton aria-label="Server" $line="#76b9ed"><ServerIcon /></TaskButton>
          <Tray>
            <ChevronUp size={16} />
            <BatteryIcon />
            <MonitorIcon />
            <SoundIcon />
            <NoteIcon />
            <span>ENG</span>
            <Clock>9:26 SA<br />14/03/2019</Clock>
          </Tray>
        </TaskBar>
      </Shell>
    </>
  );
}
